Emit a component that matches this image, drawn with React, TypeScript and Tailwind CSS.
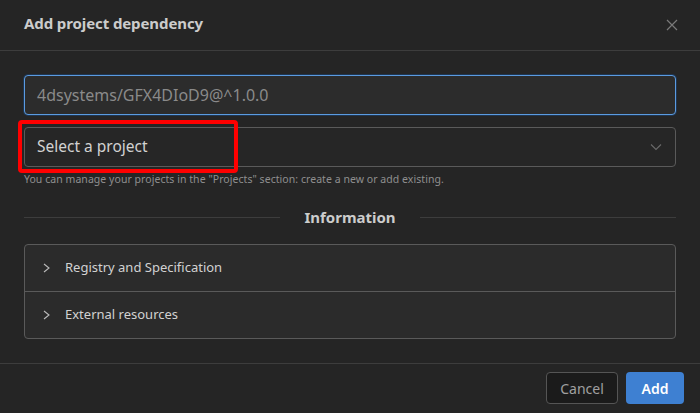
import React from "react";

const font = { fontFamily: '"Noto Sans", "Open Sans", sans-serif' };

function Chevron({ className }: { className?: string }) {
  return (
    <svg width="10" height="10" viewBox="0 0 10 10" className={className} fill="none" stroke="currentColor" strokeWidth="1.1">
      <path d="M2 1 L7 5 L2 9" />
    </svg>
  );
}

export default function App() {
  return (
    <div className="w-[700px] h-[413px] bg-[#252525] flex flex-col overflow-hidden" style={font}>
      <div className="h-[51px] flex items-center justify-between pl-6 pr-[22px] border-b border-[#3d3d3d] shrink-0">
        <div className="text-[15px] font-bold text-[#cccccc] tracking-[-0.1px] pb-[3px]">Add project dependency</div>
        <svg width="12" height="12" viewBox="0 0 12 12" stroke="#7a7a7a" strokeWidth="1.2" fill="none">
          <path d="M1 1 L11 11 M11 1 L1 11" />
        </svg>
      </div>
      <div className="flex flex-col px-6 pt-6">
        <div className="h-[40px] rounded-[4px] border border-[#5b9be0] bg-[#2c2c2c] flex items-center px-3 shadow-[0_0_0_1px_#1f3550]">
          <span className="text-[16px] text-[#8a8a8a]">4dsystems/GFX4DIoD9@^1.0.0</span>
        </div>
        <div className="relative mt-[12px]">
          <div className="h-[40px] rounded-[4px] border border-[#5a5a5a] bg-[#262626] flex items-center justify-between px-3">
            <span className="text-[15.5px] text-[#d2d2d2]">Select a project</span>
            <svg width="12" height="8" viewBox="0 0 12 8" stroke="#6a6a6a" strokeWidth="1.1" fill="none" className="mr-[1px]">
              <path d="M1 1.5 L6 6.5 L11 1.5" />
            </svg>
          </div>
          <div className="absolute left-[-6px] top-[-7px] w-[220px] h-[53px] border-[4px] border-[#ff0000] rounded-[4px]" />
        </div>
        <div className="text-[10.5px] text-[#8f8f8f] mt-[5px] leading-[14px] tracking-[0.05px]">
          You can manage your projects in the "Projects" section: create a new or add existing.
        </div>
        <div className="flex items-center mt-[20px] h-[22px]">
          <div className="flex-1 h-px bg-[#3d3d3d]" />
          <div className="px-6 text-[15px] font-bold text-[#cccccc]">Information</div>
          <div className="flex-1 h-px bg-[#3d3d3d]" />
        </div>
        <div className="mt-[16px] rounded-[4px] border border-[#5a5a5a] bg-[#2b2b2b]">
          <div className="h-[47px] flex items-center pl-[17px] text-[13px] text-[#d2d2d2] border-b border-[#5a5a5a]">
            <Chevron className="text-[#bbbbbb] mr-[13px]" />
            Registry and Specification
          </div>
          <div className="h-[46px] flex items-center pl-[17px] text-[13px] text-[#d2d2d2]">
            <Chevron className="text-[#bbbbbb] mr-[13px]" />
            External resources
          </div>
        </div>
      </div>
      <div className="mt-auto h-[50px] border-t border-[#3d3d3d] flex items-center justify-end gap-2 pr-4 pb-[1px]">
        <button className="h-[32px] w-[72px] rounded-[4px] border border-[#555555] bg-[#1b1b1b] text-[14px] text-[#a0a0a0]">Cancel</button>
        <button className="h-[32px] w-[58px] rounded-[4px] bg-[#3e80d2] text-[14px] font-semibold text-white">Add</button>
      </div>
    </div>
  );
}
